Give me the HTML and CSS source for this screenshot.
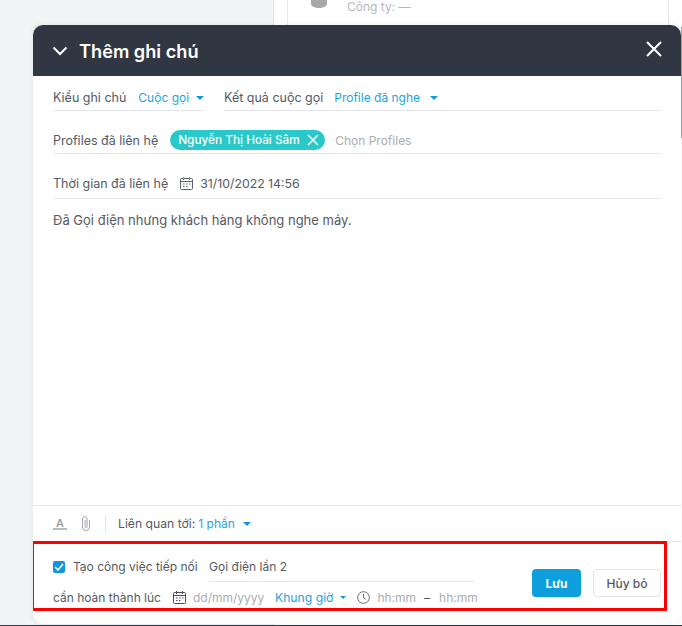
FILE: index.html
```html
<!DOCTYPE html>
<html lang="vi">
<head>
<meta charset="utf-8">
<title>Thêm ghi chú</title>
<link rel="stylesheet" href="styles.css">
</head>
<body>
<div class="backdrop">
  <div class="side"></div>
  <div class="panel">
    <div class="card">
      <svg class="db" width="18" height="8" viewBox="0 0 18 8"><path d="M1 0h16v4c0 2-4 4-8 4S1 6 1 4z" fill="#a8a8a8"/></svg>
      <span class="company">Công ty: —</span>
    </div>
  </div>
</div>
<div class="edge"></div>
<div class="thumb"></div>
<section class="modal">
  <header class="head">
    <svg class="chev" width="16" height="10" viewBox="0 0 16 10"><path d="M1.500 1.500 8 8l6.500-6.500" fill="none" stroke="#fff" stroke-width="2"/></svg>
    <h1 class="title">Thêm ghi chú</h1>
    <svg class="close" width="16" height="16" viewBox="0 0 16 16"><path d="M1 1l14 14M15 1 1 15" stroke="#fff" stroke-width="2"/></svg>
  </header>
  <div class="body">
    <div class="row-split">
      <div class="field f1"><span class="label">Kiểu ghi chú</span><span class="link">Cuộc gọi</span><i class="caret"></i></div>
      <div class="field f2"><span class="label">Kết quả cuộc gọi</span><span class="link">Profile đã nghe</span><i class="caret"></i></div>
    </div>
    <div class="field wide profiles">
      <span class="label">Profiles đã liên hệ</span>
      <span class="chip">Nguyễn Thị Hoài Sâm<svg width="12" height="12" viewBox="0 0 12 12"><path d="M1 1l10 10M11 1 1 11" stroke="#fff" stroke-width="1.500"/></svg></span>
      <span class="ph">Chọn Profiles</span>
    </div>
    <div class="field wide time">
      <span class="label">Thời gian đã liên hệ</span>
      <svg class="cal" width="13" height="13" viewBox="0 0 13 13"><rect x=".5" y="1.500" width="12" height="11" rx="1" fill="none" stroke="#5a6270"/><path d="M.5 4.500h12" stroke="#5a6270"/><path d="M3.500 0v3M9.500 0v3" stroke="#c98a3a"/><path d="M3 7h1.500M6 7h1.500M9 7h1.500M3 9.500h1.500M6 9.500h1.500" stroke="#5a6270"/></svg>
      <span class="value">31/10/2022 14:56</span>
    </div>
    <p class="note">Đã Gọi điện nhưng khách hàng không nghe máy.</p>
  </div>
  <div class="tools">
    <svg class="a" width="14" height="14" viewBox="0 0 14 14"><text x="7" y="9.500" text-anchor="middle" class="a-t">A</text><path d="M0 12h14" stroke="#a0a4aa" stroke-width="1.500"/></svg>
    <svg class="clip" width="10" height="15" viewBox="0 0 10 15"><path d="M8.500 4v7a3.500 3.500 0 0 1-7 0V3a2.300 2.300 0 0 1 4.600 0v7.500a1 1 0 0 1-2 0V4" fill="none" stroke="#a0a4aa"/></svg>
    <span class="sep"></span>
    <span class="label tool-label">Liên quan tới:</span><span class="link rel">1 phần</span><i class="caret"></i>
  </div>
  <div class="foot">
    <div class="foot-main">
      <div class="foot-a">
        <span class="check"><svg width="10" height="8" viewBox="0 0 10 8"><path d="M1 4l3 3 5-6" fill="none" stroke="#fff" stroke-width="1.500"/></svg></span>
        <span class="tao">Tạo công việc tiếp nối</span>
        <span class="task">Gọi điện lần 2</span>
      </div>
      <div class="foot-b">
        <span class="need">cần hoàn thành lúc</span>
        <svg class="cal2" width="13" height="13" viewBox="0 0 13 13"><rect x=".5" y="1.500" width="12" height="11" rx="1" fill="none" stroke="#4a505a"/><path d="M.5 4.500h12" stroke="#4a505a"/><path d="M3.500 0v3M9.500 0v3" stroke="#4a505a"/><path d="M3 7h1.500M6 7h1.500M9 7h1.500M3 9.500h1.500M6 9.500h1.500" stroke="#4a505a"/></svg>
        <span class="ph date">dd/mm/yyyy</span>
        <span class="frame">Khung giờ</span><i class="caret small"></i>
        <svg class="clock" width="13" height="13" viewBox="0 0 13 13"><circle cx="6.500" cy="6.500" r="5.800" fill="none" stroke="#666c75"/><path d="M6.500 3v3.700l2.300 1.400" fill="none" stroke="#666c75"/></svg>
        <span class="ph hh">hh:mm</span><span class="dash">–</span><span class="ph hh">hh:mm</span>
      </div>
    </div>
    <button class="btn save">Lưu</button>
    <button class="btn cancel">Hủy bỏ</button>
  </div>
  <div class="mark"></div>
</section>
</body>
</html>
```
FILE: styles.css
```css
*{box-sizing:border-box}
html,body{margin:0;height:100%;overflow:hidden}
body{width:682px;height:626px;position:relative;background:#f3f4f6;font-family:Inter,"Noto Sans",sans-serif;font-size:12px;color:#555a62}
.backdrop{display:flex;height:625px}
.edge{height:1px;background:#33363c}
.thumb{position:absolute;left:681px;top:27px;width:1px;height:111px;background:#a4a7ac}
.side{width:273px}
.panel{width:409px;height:625px;background:#fff;border-left:1px solid #e4e5e9;padding-left:13px}
.card{width:382px;height:40px;border-left:1px solid #e8e9ec;border-right:1px solid #e4e5e9;padding:1px 0 0 22px;display:flex;gap:19px;position:relative}
.db{margin-top:-1px}
.company{color:#b4b7bb;line-height:12px}
.modal{position:absolute;left:33px;top:25px;width:648px;height:599px;background:#fff;border-radius:10px;box-shadow:0 0 6px rgba(0,0,0,.08);display:flex;flex-direction:column;overflow:hidden}
.head{height:51px;flex:none;background:#303642;display:flex;align-items:center;padding:0 19px;color:#fff}
.chev{margin-right:11px}
.title{font-size:18.200px;font-weight:600;margin:0;flex:1;color:#fff}
.close{margin-bottom:3px}
.body{flex:1;padding:0 20px;min-height:0}
.row-split{display:flex;gap:20px}
.field{display:flex;align-items:center;border-bottom:1px solid #e5e6ec;white-space:nowrap}
.f1{width:151px}
.f2{flex:1}
.row-split .field{padding-top:9px;height:35px}
.label{color:#555a62;font-size:12.500px}
.tool-label{font-size:12.200px}
.link{color:#1da4e0;font-size:12px}
.f1 .link{margin-left:12px}
.f2 .link{margin-left:11px}
.caret{display:inline-block;margin-left:7px;border-style:solid;border-width:4px 4.500px 0;border-color:#1296db transparent transparent}
.f2 .caret{margin-left:10px}
.wide{width:608px}
.profiles{height:43px;padding-top:16px}
.chip{margin-left:12px;height:20px;width:155px;border-radius:10px;background:#2ac8c8;color:#fff;font-weight:500;font-size:11.800px;display:flex;align-items:center;justify-content:space-between;padding:0 6px 0 8px}
.ph{color:#a9adb2;font-size:12px}
.profiles .ph{margin-left:10px}
.time{height:45px;padding-top:15px}
.cal{margin:0 7px 0 12px}
.value{color:#555a62;font-size:12.300px}
.note{margin:13px 0 0;font-size:13px;line-height:16px;color:#555a62}
.tools{height:36px;flex:none;border-top:1px solid #e5e6ec;padding:0 20px;display:flex;align-items:center}
.a-t{font:500 11px Inter,sans-serif;fill:#8f9399}
.clip{margin-left:14px}
.sep{width:1px;height:18px;background:#e5e6ec;margin:0 12px 0 14px}
.rel{margin-left:3px}
.tools .caret{margin-left:8px}
.foot{height:83px;flex:none;border-top:1px solid #e5e6ec;padding:0 20px;display:flex;position:relative}
.foot-main{width:459px;padding-top:15px}
.foot-a{display:flex;align-items:flex-start;height:25px}
.check{width:12px;height:12px;margin-top:4px;background:#1296db;border-radius:2px;display:flex;align-items:center;justify-content:center;margin-right:8px}
.tao{width:136px;line-height:20px}
.task{width:265px;height:25px;line-height:20px;border-bottom:1px solid #e5e6ec}
.foot-b{display:flex;align-items:center;height:30px;white-space:nowrap}
.cal2{margin:0 7px 0 12px}
.date{width:70px}
.frame{margin-left:12px;color:#1da4e0;font-size:12.200px}
.caret.small{margin-left:7px;border-width:3px 3px 0}
.clock{margin:0 7px 0 11px}
.dash{margin:0 9px 0 8px}
.btn{font:500 12px Inter,sans-serif;border-radius:4px;height:28px;margin-top:27px;padding:0;cursor:pointer}
.save{width:49px;background:#0d9fdd;border:0;color:#fff;font-weight:700;margin-left:20px}
.cancel{width:68px;background:#fff;border:1px solid #e3e4e8;color:#555a62;margin-left:12px}
.mark{position:absolute;left:-2px;top:516px;width:636px;height:70px;border:3px solid #f00;pointer-events:none}
```
